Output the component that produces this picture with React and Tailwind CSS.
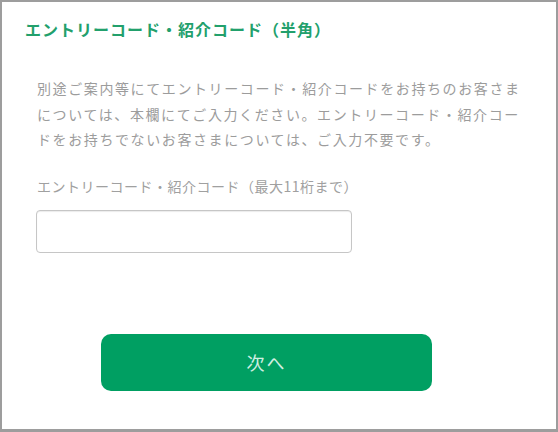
import React from "react";

const App = () => {
  return (
    <div className="w-[558px] h-[432px] bg-white border-[#9d9d9d] border-t-2 border-l-2 border-r-2 border-b-[3px] font-['Noto_Sans_CJK_JP','Noto_Sans',sans-serif] flex flex-col">
      <div className="pl-[23px] pt-[17px]">
        <h1 className="text-[16px] leading-[20px] font-bold tracking-[1px] text-[#22a06c]">
          エントリーコード・紹介コード（半角）
        </h1>
      </div>

      <div className="pl-[35px] pr-[25px] pt-[37px]">
        <p className="text-[14px] leading-[25.5px] tracking-[1.6px] text-[#9c9c9c]">
          別途ご案内等にてエントリーコード・紹介コードをお持ちのお客さまについては、本欄にてご入力ください。エントリーコード・紹介コードをお持ちでないお客さまについては、ご入力不要です。
        </p>

        <label className="block mt-[23px] text-[14px] leading-[20px] tracking-[0.5px] text-[#a0a0a0]">
          エントリーコード・紹介コード（最大11桁まで）
        </label>
        <input
          type="text"
          className="block mt-[14px] -ml-px w-[316px] h-[43px] px-3 border border-[#c6c6c6] rounded-[4px] shadow-[inset_0_1px_1px_rgba(0,0,0,0.08)] outline-none"
        />

        <button
          type="button"
          className="block mt-[81px] ml-[64px] w-[331px] h-[57px] rounded-[10px] bg-[#009f62] text-[18px] tracking-[2px] text-[#cfeee1]"
        >
          次へ
        </button>
      </div>
    </div>
  );
};

export default App;
